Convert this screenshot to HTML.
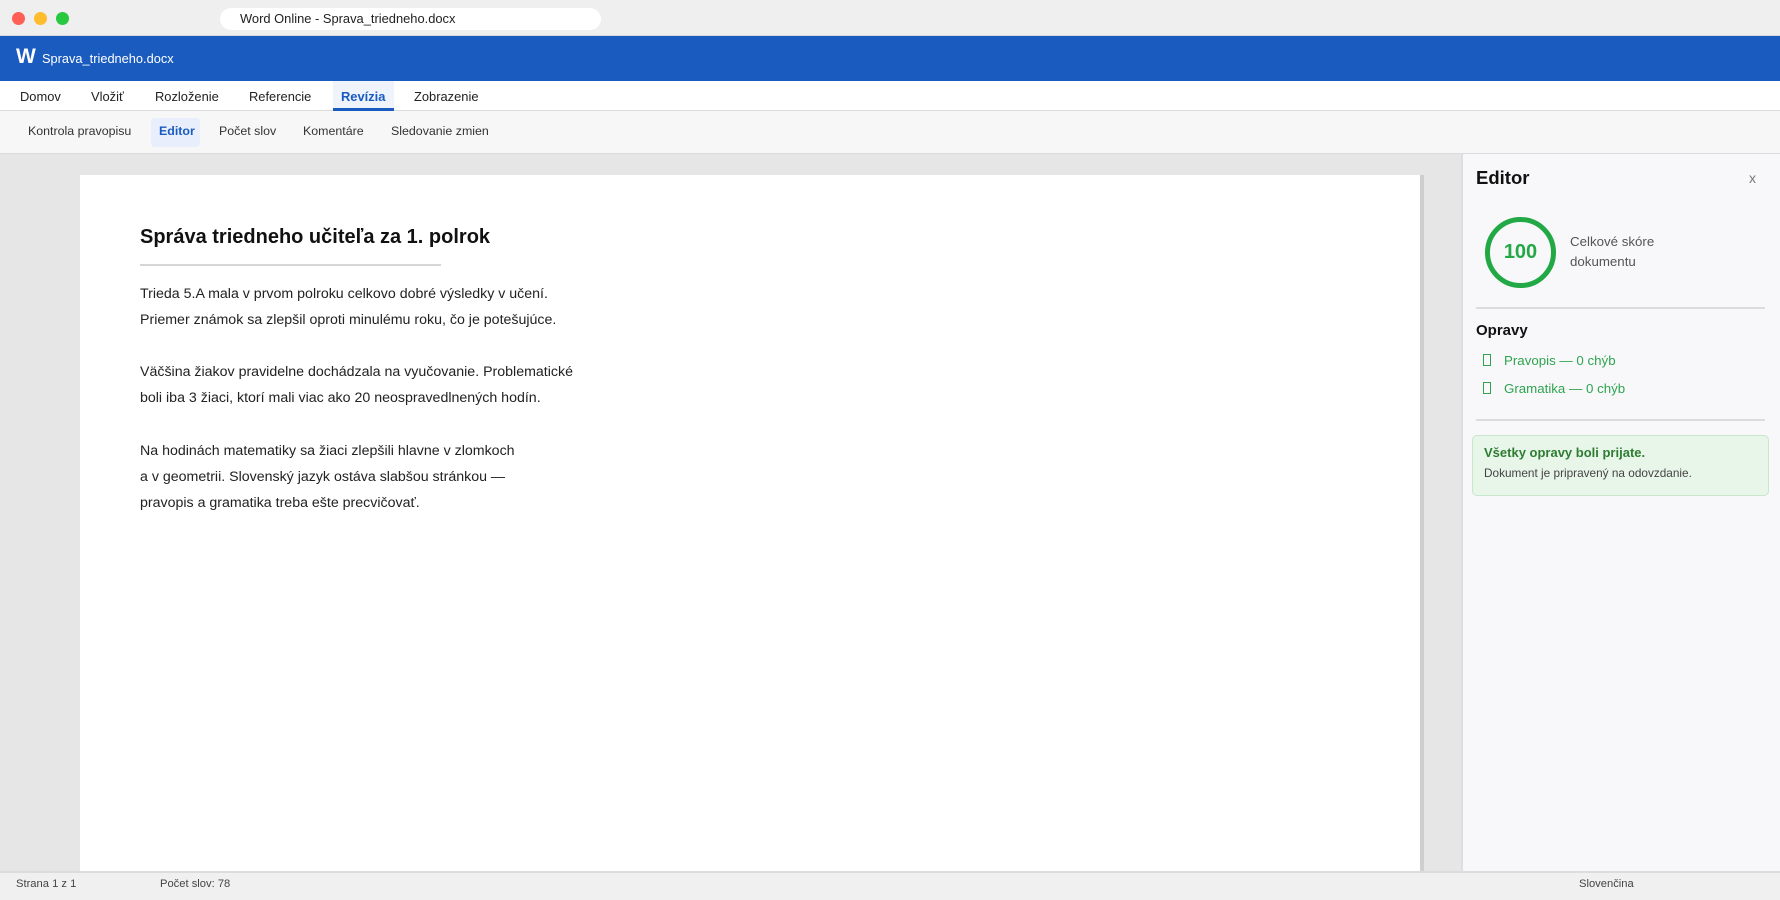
<!DOCTYPE html>
<html><head><meta charset="utf-8">
<style>
*{margin:0;padding:0;box-sizing:border-box}
body{width:1780px;height:900px;overflow:hidden;position:relative;font-family:"Liberation Sans",Arial,sans-serif;background:#e6e6e6}
.a{position:absolute;white-space:nowrap}
</style></head><body>
<div class="a" style="left:0;top:0;width:1780px;height:36px;background:#efefef;border-bottom:1px solid #d8d8d8"></div>
<div class="a" style="left:12px;top:12px;width:13px;height:13px;border-radius:50%;background:#fe5f57"></div>
<div class="a" style="left:34px;top:12px;width:13px;height:13px;border-radius:50%;background:#febc2e"></div>
<div class="a" style="left:56px;top:12px;width:13px;height:13px;border-radius:50%;background:#28c840"></div>
<div class="a" style="left:220px;top:8px;width:381px;height:22px;border-radius:11px;background:#fff"></div>
<div class="a" style="left:240px;top:10px;font-size:12.9px;color:#222;line-height:18px">Word Online - Sprava_triedneho.docx</div>
<div class="a" style="left:0;top:36px;width:1780px;height:45px;background:#1a5bbf"></div>
<div class="a" style="left:16px;top:44px;font-size:21px;font-weight:bold;color:#fff;line-height:26px">W</div>
<div class="a" style="left:42px;top:50px;font-size:12.8px;color:#fff;line-height:17px">Sprava_triedneho.docx</div>
<div class="a" style="left:0;top:81px;width:1780px;height:30px;background:#fff;border-bottom:1px solid #dcdcdc"></div>
<div class="a" style="left:333px;top:81px;width:61px;height:30px;background:#eef3fc;border-bottom:3px solid #1a5bbf"></div>
<div class="a" style="left:20px;top:88px;font-size:12.9px;color:#222;line-height:17px">Domov</div>
<div class="a" style="left:91px;top:88px;font-size:12.9px;color:#222;line-height:17px">Vložiť</div>
<div class="a" style="left:155px;top:88px;font-size:12.9px;color:#222;line-height:17px">Rozloženie</div>
<div class="a" style="left:249px;top:88px;font-size:12.9px;color:#222;line-height:17px">Referencie</div>
<div class="a" style="left:341px;top:88px;font-size:12.9px;color:#1a5bbf;font-weight:bold;line-height:17px">Revízia</div>
<div class="a" style="left:414px;top:88px;font-size:12.9px;color:#222;line-height:17px">Zobrazenie</div>
<div class="a" style="left:0;top:111px;width:1780px;height:43px;background:#f7f7f7;border-bottom:1px solid #dcdcdc"></div>
<div class="a" style="left:151px;top:118px;width:49px;height:29px;background:#e8eefc;border-radius:4px"></div>
<div class="a" style="left:28px;top:123px;font-size:12.4px;color:#333;line-height:16px">Kontrola pravopisu</div>
<div class="a" style="left:159px;top:123px;font-size:12.4px;color:#1a5bbf;font-weight:bold;line-height:16px">Editor</div>
<div class="a" style="left:219px;top:123px;font-size:12.4px;color:#333;line-height:16px">Počet slov</div>
<div class="a" style="left:303px;top:123px;font-size:12.4px;color:#333;line-height:16px">Komentáre</div>
<div class="a" style="left:391px;top:123px;font-size:12.4px;color:#333;line-height:16px">Sledovanie zmien</div>
<div class="a" style="left:80px;top:175px;width:1344px;height:697px;background:#fff;border-right:4px solid #cfcfcf"></div>
<div class="a" style="left:140px;top:224px;font-size:20px;font-weight:bold;color:#111;line-height:26px">Správa triedneho učiteľa za 1. polrok</div>
<div class="a" style="left:140px;top:264px;width:301px;height:2px;background:#d6d6d6"></div>
<div class="a" style="left:140px;top:281px;font-size:14.2px;color:#222;line-height:26.1px">Trieda 5.A mala v prvom polroku celkovo dobré výsledky v učení.<br>Priemer známok sa zlepšil oproti minulému roku, čo je potešujúce.<br><br>Väčšina žiakov pravidelne dochádzala na vyučovanie. Problematické<br>boli iba 3 žiaci, ktorí mali viac ako 20 neospravedlnených hodín.<br><br>Na hodinách matematiky sa žiaci zlepšili hlavne v zlomkoch<br>a v geometrii. Slovenský jazyk ostáva slabšou stránkou —<br>pravopis a gramatika treba ešte precvičovať.</div>
<div class="a" style="left:1461px;top:154px;width:319px;height:718px;background:#f8f8fa;border-left:2px solid #dedede"></div>
<div class="a" style="left:1476px;top:167px;font-size:18.5px;font-weight:bold;color:#111;line-height:22px">Editor</div>
<div class="a" style="left:1749px;top:170px;font-size:14px;color:#777;line-height:16px">x</div>
<div class="a" style="left:1485px;top:217px;width:71px;height:71px;border-radius:50%;border:5px solid #22a845"></div>
<div class="a" style="left:1485px;top:239px;width:71px;text-align:center;font-size:20px;font-weight:bold;color:#22a845;line-height:26px">100</div>
<div class="a" style="left:1570px;top:232px;font-size:13.3px;color:#555;line-height:20px">Celkové skóre<br>dokumentu</div>
<div class="a" style="left:1476px;top:307px;width:289px;height:2px;background:#dcdcdc"></div>
<div class="a" style="left:1476px;top:322px;font-size:15px;font-weight:bold;color:#111;line-height:18px">Opravy</div>
<div class="a" style="left:1483px;top:354px;width:8px;height:12px;border:1px solid #2ea44f"></div>
<div class="a" style="left:1504px;top:352px;font-size:13.3px;color:#2ea44f;line-height:17px">Pravopis — 0 chýb</div>
<div class="a" style="left:1483px;top:382px;width:8px;height:12px;border:1px solid #2ea44f"></div>
<div class="a" style="left:1504px;top:380px;font-size:13.3px;color:#2ea44f;line-height:17px">Gramatika — 0 chýb</div>
<div class="a" style="left:1476px;top:419px;width:289px;height:2px;background:#dcdcdc"></div>
<div class="a" style="left:1472px;top:435px;width:297px;height:61px;background:#e8f5e9;border:1px solid #c8e6c9;border-radius:5px"></div>
<div class="a" style="left:1484px;top:444px;font-size:13px;font-weight:bold;color:#2e7d32;line-height:17px">Všetky opravy boli prijate.</div>
<div class="a" style="left:1484px;top:466px;font-size:11.8px;color:#444;line-height:15px">Dokument je pripravený na odovzdanie.</div>
<div class="a" style="left:0;top:871px;width:1780px;height:29px;background:#f0f0f0;border-top:2px solid #dcdcdc"></div>
<div class="a" style="left:16px;top:877px;font-size:11.2px;color:#444;line-height:14px">Strana 1 z 1</div>
<div class="a" style="left:160px;top:877px;font-size:11.2px;color:#444;line-height:14px">Počet slov: 78</div>
<div class="a" style="left:1579px;top:877px;font-size:11.2px;color:#444;line-height:14px">Slovenčina</div>
</body></html>
